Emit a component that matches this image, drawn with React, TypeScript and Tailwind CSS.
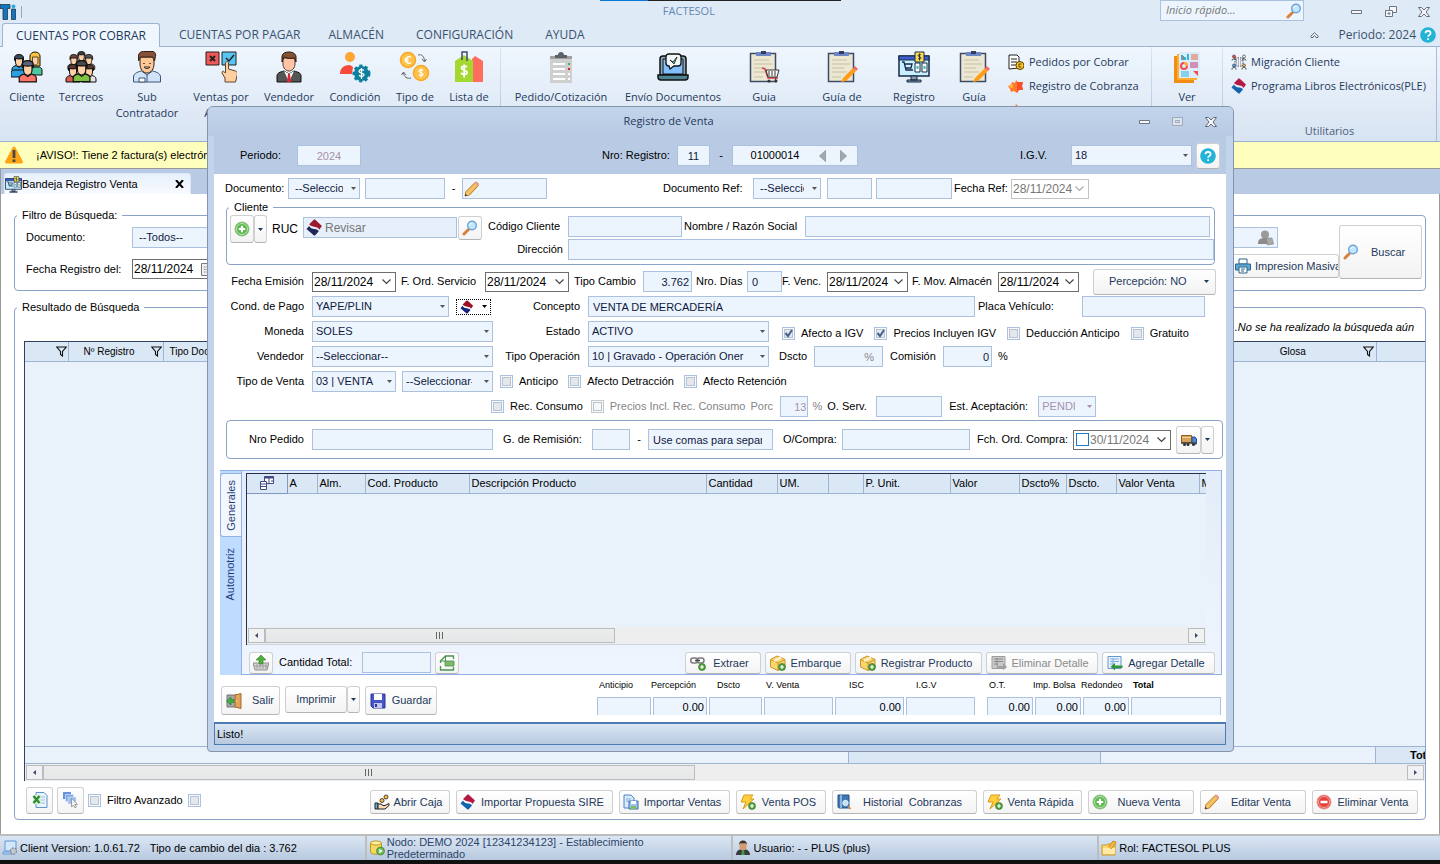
import type { InputHTMLAttributes, ReactNode } from "react";
import clsx from "clsx";

/* ---------- icons ---------- */

type IconProps = { size?: number; box?: number; children?: ReactNode };

const Icon = ({ size = 16, box = 16, children }: IconProps) => (
    <svg width={size} height={size} viewBox={`0 0 ${box} ${box}`} fill="none" className="shrink-0" aria-hidden="true">
        {children}
    </svg>
);

// bust of 16x18 units, used by all people icons
const Bust = ({ x, y, s = 1, hair, shirt, skin = "#ffd0a6" }: { x: number; y: number; s?: number; hair: string; shirt: string; skin?: string }) => (
    <g transform={`translate(${x} ${y}) scale(${s})`} stroke="#111" strokeWidth="1">
        <path d="M1 18v-3c0-2 2-3 4-3.500l3 2 3-2c2 .5 4 1.500 4 3.500v3z" fill={shirt} />
        <path d="M4.500 4h7v4c0 2.500-1.500 4.500-3.500 4.500S4.500 10.500 4.500 8z" fill={skin} />
        <path d="M3.500 6.500V4c0-2 1.500-3.500 4.500-3.500s4.500 1.500 4.500 3.500v2.500l-1-2c-2 .5-5 .5-7 0z" fill={hair} />
    </g>
);

const ClientesIcon = () => (
    <Icon size={32} box={32}>
        <Bust x={0} y={3} s={1} hair="#39485c" shirt="#2b9fe0" />
        <path d="M0 26v-4c0-2 2-3 4-3h8c2 0 3 1 3 3v4z" fill="#2b9fe0" stroke="#111" />
        <path d="M19 15V5c0-2 2-4 5-4s5 2 5 4v10z" fill="#ffc23d" stroke="#111" />
        <path d="M17 24v-5c0-2 2-3 4-3h6c2 0 4 1 4 3v5z" fill="#4fc7a0" stroke="#111" />
        <path d="M21.500 6h5.500v5c0 2-1 3-2.700 3s-2.800-1-2.800-3z" fill="#ffd0a6" stroke="#111" strokeWidth=".7" />
        <Bust x={7} y={9} s={1.22} hair="#59627a" shirt="#ff7466" />
    </Icon>
);

const TercerosIcon = () => (
    <Icon size={32} box={32}>
        <Bust x={10} y={0} s={0.8} hair="#3b3b3b" shirt="#888" />
        <Bust x={2} y={3} s={0.85} hair="#6d4638" shirt="#777" />
        <Bust x={17} y={3} s={0.85} hair="#555" shirt="#888" />
        <Bust x={0} y={13} s={1} hair="#5c3b2e" shirt="#d95c4f" />
        <Bust x={16} y={13} s={1} hair="#5c3b2e" shirt="#e3e3e3" />
        <Bust x={7} y={9} s={1.2} hair="#4a4a4a" shirt="#7cc142" />
    </Icon>
);

const ContratadorIcon = () => (
    <Icon size={32} box={32}>
        <path d="M2.500 31v-5c0-3 3-5 8-6l5.500 4 5.500-4c5 1 8 3 8 6v5z" fill="#cfe3fa" stroke="#3d5576" />
        <path d="M9 6h14v7c0 5-3 9-7 9s-7-4-7-9z" fill="#ffc795" stroke="#33231a" />
        <path d="M7.500 10V5c0-3 2-4.500 5-4.500h10c2 1 2.500 3 2 5l-1 4.500-2-4h-12z" fill="#87503a" stroke="#33231a" />
        <path d="M13 16c1 2 5 2 6 0z" fill="#fff" stroke="#33231a" />
        <path d="M13 12v1M19 12v1" stroke="#33231a" strokeWidth="1.500" />
        <path d="M16 24v7M8 27h6v4H8z" stroke="#3d5576" fill="#fff" />
    </Icon>
);

const VotoIcon = () => (
    <Icon size={32} box={32}>
        <path d="M1 1h13v13H1z" fill="#f25757" stroke="#222" />
        <path d="M17 1h14v13H17z" fill="#59c3f2" stroke="#222" />
        <path d="M5 5l5 5M10 5l-5 5" stroke="#222" strokeWidth="2" />
        <path d="M21 7l3 3 5-6" stroke="#222" strokeWidth="1.500" />
        <path d="M20 31v-4l-3-5c0-2 1-2.500 2.500-1l1 1V12c0-2 3-2 3 0v6l7 2c1 .5 2 1 2 3l-2 8z" fill="#ffcf9f" stroke="#5c4431" />
    </Icon>
);

const VendedorIcon = () => (
    <Icon size={32} box={32}>
        <path d="M4 31v-6c0-3 3-4 7-5l5 3 5-3c4 1 7 2 7 5v6z" fill="#555" stroke="#111" />
        <path d="M11 20l5 11 5-11-5 3z" fill="#fff" />
        <path d="M15 23h2l1 8h-4z" fill="#e02533" />
        <path d="M10 7h12v6c0 4-3 7-6 7s-6-3-6-7z" fill="#ffc3a5" stroke="#5a3b2c" />
        <path d="M9 11V5c1-3 3-4 7-4s7 2 7 5v5l-2-4c-4 1-8 0-10-1z" fill="#845233" stroke="#2b1a10" />
    </Icon>
);

const CondicionIcon = () => (
    <Icon size={32} box={32}>
        <circle cx="11" cy="6" r="5" fill="#ffa632" />
        <path d="M1 23c0-6 4-9 10-9l3 2-1 7z" fill="#f44b3a" />
        <circle cx="22.500" cy="22.500" r="7.500" fill="#0d7f9c" stroke="#0d7f9c" strokeWidth="3" strokeDasharray="3 2.500" />
        <path d="M25 19.500c-2-1.500-5-1-5 .8 0 2.200 5 1.300 5 3.500 0 2-3.500 2-5 .5M22.500 17v11" stroke="#fff" strokeWidth="1.300" />
    </Icon>
);

const CambioIcon = () => (
    <Icon size={32} box={32}>
        <circle cx="9" cy="9" r="7.500" fill="#ffc14a" stroke="#f7a823" strokeWidth="1.500" />
        <circle cx="22" cy="22" r="7.500" fill="#ffc14a" stroke="#f7a823" strokeWidth="1.500" />
        <path d="M12 6.500c-2-2-5-.5-5 2.500s3 4.500 5 2.500M5.500 8h4M5.500 10h4" stroke="#fff" strokeWidth="1.300" />
        <path d="M24 19.500c-2-1.500-4-.8-4 .6 0 2 4 1.300 4 3.200 0 1.800-2.800 1.600-4 .5M22 17.500v9" stroke="#fff" strokeWidth="1.200" />
        <path d="M19 4c4-1 6 1 6.500 6m-2.500-2l2.500 3 2-3M12 27c-4 1-7-1-7.500-5m-2 2l2-3 2.500 3" stroke="#666" />
    </Icon>
);

const PrecioIcon = () => (
    <Icon size={32} box={32}>
        <path d="M19 8l3-3 8 5v21H18z" fill="#ff6d5e" />
        <path d="M2 10l9-6 9 6v21H2z" fill="#a4d830" />
        <path d="M9 9V1h5v9" stroke="#3d4b6c" strokeWidth="1.500" />
        <path d="M14 16c-2-1.500-5.500-1-5.500 1 0 2.500 5.500 1.500 5.500 4.500 0 2.500-4 2.500-6 .5M11.200 13.500v13" stroke="#fff" strokeWidth="1.800" />
    </Icon>
);

const PedidoIcon = () => (
    <Icon size={32} box={32}>
        <path d="M5 5h22v27H5z" fill="#cfcfcf" />
        <path d="M5 5h22v3H5z" fill="#a0a0a0" />
        <path d="M10 7V4h3c0-4 6-4 6 0h3v3z" fill="#5d6066" />
        <path d="M8 13h12M8 18h12M8 23h12M8 28h12" stroke="#fff" strokeWidth="2" />
        <path d="M23 12h2v2h-2z" fill="#46b455" />
        <path d="M23 17h2v2h-2z" fill="#d8232a" />
        <path d="M23 22h2v2h-2zM23 27h2v2h-2z" fill="#fff" />
    </Icon>
);

const EnvioIcon = () => (
    <Icon size={32} box={32}>
        <path d="M3 24V8c0-2 1-3 3-3h20c2 0 3 1 3 3v16z" fill="#8ea9bd" stroke="#111" strokeWidth="1.500" />
        <path d="M6 8h20v15H6z" fill="#81c0ff" stroke="#111" />
        <path d="M1 24h30v2c0 2-1 3-3 3H4c-2 0-3-1-3-3z" fill="#4f8593" stroke="#111" strokeWidth="1.500" />
        <path d="M12 3h9c2 0 3 1 3 3v6c0 2-1 3-3 3h-4l-4 3-1-3c-2 0-3-1-3-3V6c0-2 1-3 3-3z" fill="#f3f6f7" stroke="#111" strokeWidth="1.300" />
        <path d="M13 9l3 2 4-5-3 7z" fill="#57d29a" stroke="#111" strokeWidth=".8" />
    </Icon>
);

const GuiaIcon = ({ cart }: { cart?: boolean }) => (
    <Icon size={32} box={32}>
        <path d="M2.500 2.500h25v28h-25z" fill="#ebe7d3" stroke="#3e4b66" strokeWidth="1.500" />
        <path d="M8 1h15v4H8z" fill="#6d86c7" />
        <path d="M13 0h5v3h-5z" fill="#343d57" />
        <path d="M6 9h15M6 13h18M6 17h12M6 21h15M6 26h9" stroke="#c7bf9f" />
        {cart ? (
            <g>
                <path d="M14 17l3 1 3 9h10" stroke="#d8394b" strokeWidth="1.500" />
                <path d="M18 19h13l-2 7H20z" fill="#fff" stroke="#333" />
                <path d="M21 20v5M24 20v5M27 20v5" stroke="#333" />
                <circle cx="21" cy="30" r="1.500" fill="#333" />
                <circle cx="28" cy="30" r="1.500" fill="#333" />
            </g>
        ) : (
            <g>
                <path d="M15 31l2-4 10-10 3 3-10 10z" fill="#ff9c1a" />
                <path d="M27 17l2-2 3 3-2 2z" fill="#ef6b68" />
            </g>
        )}
    </Icon>
);

const MonitorIcon = ({ size = 32 }: { size?: number }) => (
    <Icon size={size} box={32}>
        <path d="M1 5h30v20H1z" fill="#c9f0ff" stroke="#172a48" strokeWidth="1.500" />
        <path d="M1 5h30v4H1z" fill="#3e5fd0" stroke="#172a48" />
        <path d="M13 25h6v4h-6zM9 29h14v2H9z" fill="#8a97a6" stroke="#172a48" />
        <path d="M4 11h2l2 8h7M6 13h8l-1 4H7" stroke="#172a48" strokeWidth="1.300" />
        <path d="M17 12h5v9h-5zM24 12h5v9h-5z" fill="#fff" stroke="#172a48" />
        <path d="M18.500 15h2v3h-2zM25.500 15h2v3h-2z" fill="#46b4a0" />
        <path d="M17 1h9v10h-9z" fill="#ffdc4d" stroke="#172a48" />
        <path d="M23 4c-1-1-3-.5-3 .7s3 .8 3 2.200-2 1.500-3 .5M21.500 2.500v7" stroke="#172a48" strokeWidth=".9" />
    </Icon>
);

const ReporteIcon = () => (
    <Icon size={32} box={32}>
        <path d="M3 5h20v27H3z" fill="#f28c13" />
        <path d="M6 3h20v26H6z" fill="#ffac2f" />
        <path d="M8 1h21v26H8z" fill="#dcecfb" />
        <path d="M11 4v5M14 6v3M17 3v6" stroke="#2fb6dd" strokeWidth="2" />
        <path d="M12.500 5v4M20 4h7M20 6h7M20 8h7" stroke="#e2683c" strokeWidth="1" />
        <circle cx="13" cy="15" r="3" stroke="#f14c4c" strokeWidth="2" />
        <path d="M13 12a3 3 0 0 1 3 3" stroke="#ffac2f" strokeWidth="2" />
        <path d="M19 12h8M19 14h8M19 16h8" stroke="#c8336e" />
        <path d="M10 21h8M10 23h8M10 25h8" stroke="#2fb6dd" />
        <path d="M22 20h5v5z" fill="#f14c4c" />
    </Icon>
);

const PedidosCobrarIcon = () => (
    <Icon>
        <path d="M1 15V1h8l2 2v11z" fill="#fff" stroke="#222" />
        <path d="M3 5h6M3 8h6M3 11h5" stroke="#222" />
        <circle cx="12" cy="11.500" r="4" fill="#ffc928" stroke="#5c4200" />
        <path d="M13.500 10h-2.500v3h2.500" stroke="#5c4200" />
    </Icon>
);

const CobranzaIcon = () => (
    <Icon>
        <path d="M0 8l3-1 1-3 3 1 1-3 3 3 4-1-1 4 1 4-4 0-2 3-3-2-3 1-1-3z" fill="#ff7b2b" />
        <path d="M9 4l6 0-1 4 1 4-4 0-2 3z" fill="#f7502b" />
        <path d="M1 7l4-1v4l-4-1z" fill="#ffb53b" />
    </Icon>
);

const MigracionIcon = () => (
    <Icon>
        <path d="M4 4h8v8H4z" stroke="#445" strokeDasharray="1.500 1" />
        <path d="M5 6h6M5 8h6M5 10h6" stroke="#445" strokeWidth=".7" strokeDasharray="1 1" />
        <circle cx="3" cy="2.500" r="1.500" fill="#ef4b4b" stroke="#333" strokeWidth=".6" />
        <circle cx="13" cy="2.500" r="1.500" fill="#eee" stroke="#333" strokeWidth=".6" />
        <circle cx="3" cy="11.500" r="1.500" fill="#53a7ef" stroke="#333" strokeWidth=".6" />
        <circle cx="13" cy="11.500" r="1.500" fill="#ffb13b" stroke="#333" strokeWidth=".6" />
        <path d="M1 6.500c0-2 4-2 4 0M11 6.500c0-2 4-2 4 0M1 15.500c0-3 4-3 4 0M11 15.500c0-3 4-3 4 0" stroke="#333" />
    </Icon>
);

const SunatIcon = ({ size = 16, top = "#b31942", bottom = "#1463ae" }: { size?: number; top?: string; bottom?: string }) => (
    <Icon size={size}>
        <path d="M3 5l4.500-4.500h1L15 6.500l-2.500 3.500C11.500 6.500 6 8.500 3 5z" fill={top} />
        <path d="M.5 9.500L3 6.500c2 4.500 7.500 1.500 9 5L8.500 15.500h-1z" fill={bottom} />
    </Icon>
);

const HelpIcon = () => (
    <Icon>
        <circle cx="8" cy="8" r="7.800" fill="#22b3d6" />
        <path d="M5.500 6.200C5.500 3 10.600 3 10.600 6.200c0 1.800-2.500 1.900-2.500 3.600M8.100 11.300v1.600" stroke="#fff" strokeWidth="1.700" />
    </Icon>
);

const LupaIcon = () => (
    <Icon>
        <path d="M2 14l4.500-4.500" stroke="#d8813f" strokeWidth="3" strokeLinecap="round" />
        <circle cx="10" cy="5.500" r="4.300" fill="#c2e6fb" stroke="#6aa3dc" strokeWidth="1.400" />
        <path d="M7.500 5c.5-1.500 2-2 3-1.800" stroke="#fff" />
    </Icon>
);

const LapizIcon = () => (
    <Icon>
        <path d="M1 15l1-4.500L11 1.500c1-1 4 1.500 3.300 3L5.500 14z" fill="#fbd06e" stroke="#b5792d" />
        <path d="M3 11.500l8.500-8.500M4.500 13l8.500-8.500" stroke="#e0963a" strokeWidth=".8" />
        <path d="M10.500 2l1-1c1.300-.8 4 1.800 3.300 3.200l-1 1z" fill="#e99a93" />
        <path d="M1 15l.6-2.200 1.700 1.600z" fill="#333" />
    </Icon>
);

const MasIcon = () => (
    <Icon>
        <circle cx="8" cy="8" r="7" fill="#5db84e" stroke="#8fbf86" />
        <circle cx="8" cy="8" r="5.500" stroke="#d4f0cc" strokeWidth=".8" />
        <path d="M8 4.800v6.400M4.800 8h6.400" stroke="#fff" strokeWidth="2.200" />
    </Icon>
);

const MenosIcon = () => (
    <Icon>
        <circle cx="8" cy="8" r="7" fill="#e4433d" stroke="#e89a94" />
        <circle cx="8" cy="8" r="5.500" stroke="#f6b9b4" strokeWidth=".8" />
        <path d="M4.500 8h7" stroke="#fff" strokeWidth="2.400" />
    </Icon>
);

const Plusito = () => (
    <g>
        <circle cx="12" cy="12" r="3.500" fill="#4f9f3c" stroke="#2f7322" strokeWidth=".6" />
        <path d="M12 10v4M10 12h4" stroke="#fff" strokeWidth="1.200" />
    </g>
);

const RayoIcon = () => (
    <Icon>
        <path d="M4 1h9l-3 4h4L3 15l3-7H1z" fill="#ffcf3e" stroke="#d99c18" />
        <Plusito />
    </Icon>
);

const CajaIcon = () => (
    <Icon>
        <path d="M.5 4.500L7 1l8 3.500V12l-7 3.500L.5 12z" fill="#fbd56d" stroke="#c9932c" />
        <path d="M.5 4.500L8 8v7.500M8 8l7-3.500" stroke="#c9932c" />
        <path d="M4 6l7-3.500" stroke="#fff5d0" strokeWidth="2" />
        <Plusito />
    </Icon>
);

const CadenaIcon = () => (
    <Icon>
        <rect x=".8" y="3" width="7" height="5" rx="2.500" stroke="#7c7c7c" strokeWidth="1.500" />
        <rect x="7" y="3" width="7" height="5" rx="2.500" stroke="#7c7c7c" strokeWidth="1.500" />
        <path d="M5 5.500h5" stroke="#4b4b4b" strokeWidth="1.500" />
        <Plusito />
    </Icon>
);

const DetalleIcon = ({ off }: { off?: boolean }) => (
    <Icon>
        <path d="M1 1.500h13v12H1z" fill={off ? "#c9c9c9" : "#e6f1fd"} stroke={off ? "#9d9d9d" : "#6496cf"} />
        <path d="M3 4h9M3 6.500h9M3 9h4M6 3v8" stroke={off ? "#8b8b8b" : "#7fb0e2"} />
        {off ? <path d="M6 11h6V8l4 4-4 3v-2H6z" fill="#a1a1a1" /> : <path d="M15.500 10.500H8V8L3.500 11.700 8 15.500V13h7.500z" fill="#33953b" />}
    </Icon>
);

const MonedaManoIcon = () => (
    <Icon>
        <circle cx="12" cy="3" r="2" fill="#ffbf3b" stroke="#222" strokeWidth=".8" />
        <circle cx="8" cy="6.500" r="2" fill="#ffbf3b" stroke="#222" strokeWidth=".8" />
        <path d="M1 9h3v6H1z" fill="#5db7dd" stroke="#222" />
        <path d="M4 10h3l2 1.500h2l4-2v2L11 15H4z" fill="#ffd9b5" stroke="#222" />
    </Icon>
);

const ImportarIcon = () => (
    <Icon>
        <path d="M1 1h7l3 3v10H1z" fill="#d9eafc" stroke="#4a83c6" />
        <path d="M3 5h5M3 7h3" stroke="#7fadde" />
        <path d="M6 7h9v8H6z" fill="#9cc2ee" stroke="#3c6fb1" />
        <path d="M8 7h5v3H8z" fill="#fff" />
        <path d="M8 12h5v3H8z" fill="#7fbf5b" />
    </Icon>
);

const HistorialIcon = () => (
    <Icon>
        <path d="M2 1h11v13H3.500C2 14 2 13 2 12z" fill="#3d78b5" stroke="#25527f" />
        <path d="M5 1v13" stroke="#a7c8e8" strokeWidth="1.500" />
        <circle cx="9.500" cy="9" r="2.700" fill="#bfe0f7" stroke="#e6f2fb" />
        <path d="M12 12l2.500 3" stroke="#cf8647" strokeWidth="1.800" />
    </Icon>
);

const ExcelIcon = () => (
    <Icon>
        <path d="M4 .5h8l3 3v12H4z" fill="#e8f3fd" stroke="#5c93cb" />
        <path d="M7 5h6M7 8h6M7 11h6" stroke="#9cc3e6" />
        <path d="M1 3h8v9H1z" fill="#d6efd0" />
        <path d="M1.500 4l6 7M7.500 4l-6 7" stroke="#2f8f35" strokeWidth="2.400" />
    </Icon>
);

const SeleccionIcon = () => (
    <Icon>
        <path d="M0 0h8v7H0z" fill="#6a93dc" />
        <path d="M2.500 2.500h8v7h-8z" fill="#7ba6e8" stroke="#dbe7fa" strokeWidth=".7" />
        <path d="M5 5h8v7H5z" fill="#9bbdf0" stroke="#dbe7fa" strokeWidth=".7" />
        <path d="M8.500 6v9l2-2 1.500 3 1.500-1-1.500-2.500h2.500z" fill="#f1f1f1" stroke="#8a8a8a" strokeWidth=".8" />
    </Icon>
);

const CamionIcon = () => (
    <Icon>
        <path d="M.5 3.500h10v7H.5z" fill="#d9a057" stroke="#8f5f26" />
        <path d="M1 5.500h9" stroke="#f2cf9a" />
        <path d="M11 5h3l1.500 2v5H11z" fill="#4c86d6" stroke="#254f8a" />
        <path d="M0 11h15" stroke="#444" strokeWidth="1.500" />
        <circle cx="3.500" cy="12.500" r="1.500" fill="#333" />
        <circle cx="7" cy="12.500" r="1.500" fill="#333" />
        <circle cx="12.500" cy="12.500" r="1.500" fill="#333" />
    </Icon>
);

const SalirIcon = () => (
    <Icon>
        <path d="M1 2h9v12H1z" fill="#a7a7a7" stroke="#757575" />
        <path d="M9 2l6-1.500v15L9 14z" fill="#e3a25a" stroke="#a4692c" />
        <circle cx="10.800" cy="8.300" r=".7" fill="#ffe27a" />
        <path d="M8 6.500H5V4L.5 8 5 12V9.500h3z" fill="#42ad46" stroke="#1f7a28" strokeWidth=".6" />
    </Icon>
);

const GuardarIcon = () => (
    <Icon>
        <path d="M1 1h14v14H3l-2-2z" fill="#4653c9" stroke="#2c3698" />
        <path d="M4 1h8v6H4z" fill="#fff" />
        <path d="M4 10h8v5H4z" fill="#c3c9ee" />
        <path d="M5 11h2v3H5z" fill="#2c3698" />
    </Icon>
);

const CestaIcon = () => (
    <Icon>
        <path d="M0 8h16l-2 7H2z" fill="#d6d6d6" stroke="#8e8e8e" />
        <path d="M4 9v5M7 9v5M10 9v5M13 9v5M1 11h14" stroke="#8e8e8e" strokeWidth=".7" />
        <path d="M8 0l5 5h-3v4H6V5H3z" fill="#4fae3f" stroke="#2f7d24" strokeWidth=".6" />
    </Icon>
);

const HojaVerdeIcon = () => (
    <Icon>
        <path d="M1.500 8V6l5-5h8v3M1.500 11v4h13v-3" stroke="#4c9150" strokeWidth="1.300" />
        <path d="M6.500 1v5h-5" stroke="#4c9150" />
        <path d="M6 6h9v5H6z" fill="#7fb86a" stroke="#4c9150" strokeWidth=".8" />
    </Icon>
);

const ImpresoraIcon = () => (
    <Icon>
        <path d="M4 1h8v5H4z" fill="#fff" stroke="#2c6487" />
        <path d="M.5 6h15v6H.5z" fill="#5aa8da" stroke="#2c6487" />
        <path d="M4 9h8v6H4z" fill="#fff" stroke="#2c6487" />
        <path d="M6 11h4M6 13h3" stroke="#2c6487" />
    </Icon>
);

const AlertaIcon = () => (
    <Icon size={20} box={20}>
        <path d="M10 1.500c.6 0 1 .3 1.300.8l7.500 14c.5 1-.1 2.200-1.200 2.200H2.400c-1.100 0-1.700-1.200-1.200-2.200l7.500-14c.3-.5.700-.8 1.300-.8z" fill="#ffa514" />
        <path d="M10 5v8M10 14.500v2.500" stroke="#46484d" strokeWidth="2.800" />
    </Icon>
);

const CalendarioIcon = () => (
    <Icon size={14} box={14}>
        <path d="M.5 1.500h13v12H.5z" fill="#eee" stroke="#777" />
        <path d="M3 5h8M3 7.500h8M3 10h8" stroke="#888" strokeDasharray="1.500 1" />
    </Icon>
);

const GrisIcon = () => (
    <Icon>
        <circle cx="7" cy="4.500" r="4" fill="#9a9a9a" />
        <path d="M0 13c0-4 3-5 7-5s8 2 8 6H0z" fill="#8c8c8c" />
        <path d="M8 8h6l1.500 6-6 1z" fill="#a9a9a9" stroke="#808080" strokeWidth=".6" />
    </Icon>
);

const SistemaIcon = () => (
    <Icon>
        <path d="M3 1h11v10H3zM1 12h10v2H1z" fill="#d3e7fb" stroke="#5e97d2" />
        <circle cx="11.500" cy="11" r="3" fill="#c7ccd4" stroke="#87909d" strokeWidth="1.500" strokeDasharray="2 1" />
    </Icon>
);

const BaseIcon = () => (
    <Icon>
        <path d="M1.500 3v9c0 3 11 3 11 0V3" fill="#f4d75b" stroke="#bc9c23" />
        <ellipse cx="7" cy="3" rx="5.500" ry="2" fill="#fff0a3" stroke="#bc9c23" />
        <circle cx="11.500" cy="11" r="4" fill="#6bb85b" stroke="#3d7e31" strokeWidth=".7" />
        <path d="M10.300 8.800l3.500 2.200-3.500 2.200z" fill="#fff" />
    </Icon>
);

const UsuarioIcon = () => (
    <Icon>
        <path d="M1 15c0-4 3-6 7-6s7 2 7 6z" fill="#3b3b3b" />
        <path d="M4.500 4h7v3c0 2-1.500 3.500-3.500 3.500S4.500 9 4.500 7z" fill="#d99a6c" />
        <path d="M4 5c0-3 1.500-4.500 4-4.500S12 2 12 5l-1-1.500H5z" fill="#46311f" />
        <path d="M7 10h2l.7 5H6.300z" fill="#3f9a4c" />
    </Icon>
);

const RolIcon = () => (
    <Icon>
        <path d="M1 5h5l1-1h7v11H1z" fill="#ffd86c" stroke="#c99a25" />
        <path d="M2 8h12v6H2z" fill="#ffeaa6" />
        <path d="M7 7l5-6 3 1-1 3-4 4" fill="#f2b23c" stroke="#b67c1c" strokeWidth=".7" />
    </Icon>
);

const FiltroIcon = () => (
    <Icon size={11} box={11}>
        <path d="M.8 1h9.400L6.500 5.500V10l-2-1.500v-3z" stroke="#111" strokeWidth="1.100" />
    </Icon>
);

const Flecha = ({ color = "#444" }: { color?: string }) => (
    <svg width="5" height="3" viewBox="0 0 5 3" fill={color} className="shrink-0" aria-hidden="true">
        <path d="M0 0h5L2.500 3z" />
    </svg>
);

const Chevron = ({ color = "#555" }: { color?: string }) => (
    <svg width="9" height="6" viewBox="0 0 9 6" fill="none" stroke={color} strokeWidth="1.200" className="mr-1 shrink-0" aria-hidden="true">
        <path d="M.5.5l4 4 4-4" />
    </svg>
);

const Minimizar = () => (
    <Icon size={12} box={12}>
        <path d="M.5 4.500h10v3H.5z" fill="#f5f7fa" stroke="#6d7683" />
    </Icon>
);

const Cerrar = () => (
    <Icon size={12} box={12}>
        <path d="M.5 1.500h3L6 4l2.500-2.500h3L8 6l3.500 4.500h-3L6 8l-2.500 2.500h-3L4 6z" fill="#f5f7fa" stroke="#5f6978" />
    </Icon>
);

const Restaurar = () => (
    <Icon size={12} box={12}>
        <path d="M4.500.5h7v6h-7z" fill="#f5f7fa" stroke="#6d7683" />
        <path d="M.500 4.500h7v6h-7z" fill="#f5f7fa" stroke="#6d7683" />
        <path d="M3 7h2v1H3z" stroke="#6d7683" />
    </Icon>
);

const Maximizar = () => (
    <Icon size={12} box={12}>
        <path d="M.5 1.500h10v8H.5z" fill="#dbe3ee" stroke="#a0a9b8" />
        <path d="M3.500 4.500h4v2h-4z" stroke="#a0a9b8" />
    </Icon>
);

/* ---------- controls ---------- */

const boxStyle = "h-[21px] border border-[#abc1de] bg-[#ecf5fe] text-[#101840] text-[11px] outline-none";
const btnStyle =
    "flex items-center rounded-[3px] border border-[#d0d0d0] border-b-[#b4b4b4] bg-linear-to-b from-white to-[#f3f3f3] text-[#1e395b] whitespace-nowrap overflow-hidden";

const TextBox = ({ className, ...rest }: InputHTMLAttributes<HTMLInputElement>) => (
    <input type="text" className={clsx(boxStyle, "min-w-0 shrink-0 px-1", className)} {...rest} />
);

const Combo = ({ value, className, label, off, pad = "pl-[3px]" }: { value: string; className?: string; label?: string; off?: boolean; pad?: string }) => (
    <span className={clsx("relative inline-flex items-center", className)}>
        <select aria-label={label} disabled={off} className={clsx(boxStyle, "w-full appearance-none pr-4", pad, off && "!text-[#a890b0]")}>
            <option>{value}</option>
        </select>
        <span className="pointer-events-none absolute right-1">
            <Flecha color={off ? "#a890b0" : "#555"} />
        </span>
    </span>
);

type DateBoxProps = { value?: string; className?: string; off?: boolean; calendar?: boolean; children?: ReactNode };

const DateBox = ({ value = "28/11/2024", className, off, calendar, children }: DateBoxProps) => (
    <span className={clsx("flex h-5 items-center border bg-white", off ? "border-[#c3c3c3]" : "border-[#6e6e6e]", className)}>
        {children}
        <input
            type="text"
            aria-label="Fecha"
            defaultValue={value}
            className={clsx("w-0 min-w-0 flex-1 bg-transparent pl-px text-xs outline-none", off || children ? "text-[#777]" : "text-black")}
        />
        {calendar ? <CalendarioIcon /> : <Chevron color={off ? "#aaa" : "#444"} />}
    </span>
);

const Field = ({ label, width, children, className }: { label: string; width: string; children: ReactNode; className?: string }) => (
    <label className={clsx("flex items-center", className)}>
        <span className={clsx("shrink-0 whitespace-nowrap", width)}>{label}</span>
        {children}
    </label>
);

const checkStyle =
    "size-[13px] appearance-none border border-[#abc1de] bg-[#e4e8ed] shadow-[inset_0_0_0_1px_#f7fafd,inset_0_0_0_2px_#b9c2cf] disabled:border-[#c8c8c8] disabled:bg-[#f7f7f7]";

const Check = ({ label, checked, off, className }: { label: string; checked?: boolean; off?: boolean; className?: string }) => (
    <label className={clsx("flex items-center gap-[6px] whitespace-nowrap", off && "text-[#858585]", className)}>
        <span className="relative flex">
            <input type="checkbox" defaultChecked={checked} disabled={off} className={checkStyle} />
            {checked && (
                <svg width="13" height="13" viewBox="0 0 13 13" fill="none" className="pointer-events-none absolute inset-0" aria-hidden="true">
                    <path d="M3.500 6l2.500 3 4-6" stroke="#45618f" strokeWidth="2" />
                </svg>
            )}
        </span>
        <span>{label}</span>
    </label>
);

const HScroll = ({ thumb }: { thumb: string }) => (
    <div className="flex h-[17px] items-center bg-[#eeeeee] px-px">
        <button aria-label="Izquierda" className="flex h-[15px] w-[17px] items-center justify-center border border-[#b9bcc0] bg-[#f0f1f3]">
            <svg width="3" height="5" viewBox="0 0 3 5" fill="#3b4a66" aria-hidden="true"><path d="M3 0v5L0 2.500z" /></svg>
        </button>
        <div className={clsx("flex h-[15px] items-center justify-center border border-[#b9bcc0] bg-linear-to-b from-[#ebecec] to-[#e5e7e8]", thumb)}>
            <svg width="8" height="7" viewBox="0 0 8 7" stroke="#666" aria-hidden="true"><path d="M.5 0v7M3.500 0v7M6.500 0v7" /></svg>
        </div>
        <button aria-label="Derecha" className="ml-auto flex h-[15px] w-[17px] items-center justify-center border border-[#b9bcc0] bg-[#f0f1f3]">
            <svg width="3" height="5" viewBox="0 0 3 5" fill="#3b4a66" aria-hidden="true"><path d="M0 0v5l3-2.500z" /></svg>
        </button>
    </div>
);

/* ---------- ribbon ---------- */

const grupoPrincipal = [
    { label: "Cliente", icon: <ClientesIcon />, width: "w-[54px]" },
    { label: "Tercreos", icon: <TercerosIcon />, width: "w-[54px]" },
    { label: "Sub Contratador", icon: <ContratadorIcon />, width: "w-[78px]" },
    { label: "Ventas por Acción", icon: <VotoIcon />, width: "w-[70px]" },
    { label: "Vendedor", icon: <VendedorIcon />, width: "w-[66px]" },
    { label: "Condición", icon: <CondicionIcon />, width: "w-[66px]" },
    { label: "Tipo de", icon: <CambioIcon />, width: "w-[54px]" },
    { label: "Lista de", icon: <PrecioIcon />, width: "w-[54px]" },
];

const grupoDocumentos = [
    { label: "Pedido/Cotización", icon: <PedidoIcon />, width: "w-[112px]" },
    { label: "Envío Documentos", icon: <EnvioIcon />, width: "w-[112px]" },
    { label: "Guia", icon: <GuiaIcon cart />, width: "w-[70px]" },
    { label: "Guía de", icon: <GuiaIcon />, width: "w-[86px]" },
    { label: "Registro", icon: <MonitorIcon />, width: "w-[58px]" },
    { label: "Guía", icon: <GuiaIcon />, width: "w-[62px]" },
];

const RibbonItem = ({ label, icon, width }: { label: string; icon: ReactNode; width: string }) => (
    <button className={clsx("flex shrink-0 flex-col items-center gap-[6px] pt-1 text-center leading-4", width)}>
        {icon}
        <span>{label}</span>
    </button>
);

const Divisor = () => <div className="mx-1 w-px bg-linear-to-b from-[#dbe6f3] to-[#a9bcd6]" />;

const Ribbon = () => (
    <header className="bg-[#deeaf6] font-['Open_Sans',sans-serif] text-[11px] text-[#1e395b]">
        <div className="relative flex h-[23px] items-center">
            <div className="absolute top-0 left-[600px] flex">
                <div className="h-px w-12 bg-[#0a78d8]" />
                <div className="h-px w-[193px] bg-[#222]" />
            </div>
            <svg width="17" height="16" viewBox="0 0 17 16" className="shrink-0" aria-hidden="true">
                <path d="M0 .5h10v4H7.500v11H3V4.500H0z" fill="#1377bd" stroke="#24384d" strokeWidth=".8" />
                <path d="M11.500 5h4v10.500h-4z" fill="#1377bd" stroke="#24384d" strokeWidth=".8" />
                <circle cx="13.500" cy="2.300" r="1.900" fill="#28a9e0" />
            </svg>
            <div className="ml-1 h-3 w-px bg-[#9fa9b5]" />
            <h1 className="w-full pl-[196px] text-center text-[#6786b4]">FACTESOL</h1>
            <div className="mb-0.5 flex h-[21px] w-36 shrink-0 items-center border border-[#abc1de] bg-[#ecf5fe] pr-px">
                <input type="text" aria-label="Inicio rápido" placeholder="Inicio rápido..." className="min-w-0 flex-1 pl-[5px] italic outline-none placeholder:text-[#777]" />
                <LupaIcon />
            </div>
            <div className="flex w-[136px] shrink-0 items-center justify-between pr-[10px] pl-[47px]">
                <button aria-label="Minimizar"><Minimizar /></button>
                <button aria-label="Restaurar"><Restaurar /></button>
                <button aria-label="Cerrar"><Cerrar /></button>
            </div>
        </div>

        <nav className="relative z-10 -mb-px flex h-6 items-center gap-8 text-xs text-[#3b516f]">
            <button className="ml-[2px] h-6 w-[158px] rounded-t-[3px] border border-b-0 border-[#9db4d3] bg-[#eff6fe] text-[#1e395b]">CUENTAS POR COBRAR</button>
            <button className="-ml-[13px]">CUENTAS POR PAGAR</button>
            <button className="-ml-1">ALMACÉN</button>
            <button>CONFIGURACIÓN</button>
            <button>AYUDA</button>
            <div className="ml-auto flex items-center gap-1 pr-1">
                <svg width="9" height="7" viewBox="0 0 9 7" className="mr-4" fill="#fff" stroke="#4c5b72" aria-hidden="true">
                    <path d="M.7 4.500l3.800-3.700 3.800 3.700-1.300 1.500-2.500-2.300L2 6z" />
                </svg>
                <span>Periodo: 2024</span>
                <HelpIcon />
            </div>
        </nav>

        <div className="flex h-24 overflow-hidden border-t border-b border-t-[#9db4d3] border-b-[#9db0cc] bg-linear-to-b from-[#eff6fe] to-[#d8e4f2]">
            {grupoPrincipal.map((item) => (
                <RibbonItem key={item.label} {...item} />
            ))}
            <Divisor />
            {grupoDocumentos.map((item) => (
                <RibbonItem key={item.label} {...item} />
            ))}
            <div className="flex w-[142px] flex-col gap-2 pt-[7px] pl-[3px]">
                <button className="flex items-center gap-[5px] whitespace-nowrap leading-4"><PedidosCobrarIcon />Pedidos por Cobrar</button>
                <button className="flex items-center gap-[5px] whitespace-nowrap leading-4"><CobranzaIcon />Registro de Cobranza</button>
                <button aria-label="Más" className="flex"><CobranzaIcon /></button>
            </div>
            <Divisor />
            <RibbonItem label="Ver" icon={<ReporteIcon />} width="w-[62px]" />
            <Divisor />
            <div className="flex flex-1 flex-col gap-2 pt-[7px] pl-1">
                <button className="flex items-center gap-[4px] whitespace-nowrap leading-4"><MigracionIcon />Migración Cliente</button>
                <button className="flex items-center gap-[4px] whitespace-nowrap leading-4"><SunatIcon />Programa Libros Electrónicos(PLE)</button>
                <div className="mt-auto pr-2 pb-[2px] text-center leading-4 text-[#4c607a]">Utilitarios</div>
            </div>
            <div className="mr-[3px] w-px bg-[#a9bcd6]" />
        </div>
    </header>
);

/* ---------- main tray behind the dialog ---------- */

const acciones = [
    { label: "Abrir Caja", icon: <MonedaManoIcon />, width: "w-[80px]" },
    { label: "Importar Propuesta SIRE", icon: <SunatIcon />, width: "w-[157px]" },
    { label: "Importar Ventas", icon: <ImportarIcon />, width: "w-[111px]" },
    { label: "Venta POS", icon: <RayoIcon />, width: "w-[90px]" },
    { label: "Historial  Cobranzas", icon: <HistorialIcon />, width: "w-[145px]" },
    { label: "Venta Rápida", icon: <RayoIcon />, width: "w-[99px]" },
    { label: "Nueva Venta", icon: <MasIcon />, width: "w-[106px]" },
    { label: "Editar Venta", icon: <LapizIcon />, width: "w-[106px]" },
    { label: "Eliminar Venta", icon: <MenosIcon />, width: "w-[106px]" },
];

// caption sits over the top border of its box
const Grupo = ({ title, className, children }: { title: string; className: string; children: ReactNode }) => (
    <section aria-label={title} className={clsx("flex flex-col rounded-[4px] border border-[#8ba3c7]", className)}>
        <h2 className="-mt-2 ml-[2px] self-start bg-white px-[5px] leading-[14px]">{title}</h2>
        {children}
    </section>
);

const Bandeja = () => (
    <main className="flex flex-1 flex-col border-x border-[#9a9a9a] bg-white px-[13px] pb-[14px]">
        <Grupo title="Filtro de Búsqueda:" className="mt-[21px] h-[76px]">
            <div className="flex flex-1 justify-between pr-[3px] pl-[11px]">
                <div className="flex flex-col gap-[11px] pt-[5px]">
                    <Field label="Documento:" width="w-[106px]">
                        <Combo value="--Todos--" className="w-40" pad="pl-[6px]" />
                    </Field>
                    <Field label="Fecha Registro del:" width="w-[106px]">
                        <DateBox className="w-[84px]" calendar />
                    </Field>
                </div>
                <div className="flex pt-[3px]">
                    <div className="flex flex-col gap-[6px] pt-[2px]">
                        <div className="flex h-[21px] w-[145px] items-center border border-[#abc1de] bg-[#ecf5fe] pr-[3px]">
                            <input type="text" aria-label="Cliente" className="min-w-0 flex-1 outline-none" />
                            <GrisIcon />
                        </div>
                        <button className={clsx(btnStyle, "h-6 w-[206px] gap-1 pl-[101px]")}><ImpresoraIcon />Impresion Masiva</button>
                    </div>
                    <button className={clsx(btnStyle, "h-[54px] w-[83px] gap-3 pl-[3px]")}><LupaIcon />Buscar</button>
                </div>
            </div>
        </Grupo>

        <Grupo title="Resultado de Búsqueda" className="mt-4 flex-1">
            <p className="flex h-[27px] items-center justify-end pr-[11px] italic">.No se ha realizado la búsqueda aún</p>
            <div className="ml-[9px] flex flex-1 flex-col border-t border-l border-[#33415c] bg-[#e9f1fa]">
                <table className="w-full table-fixed border-collapse text-[10px]">
                    <thead>
                        <tr className="h-[19px] border-b border-[#9db4d3] bg-[#dae7f5]">
                            <th className="w-[43px] border-r border-[#9db4d3]"><div className="flex justify-end pr-px"><FiltroIcon /></div></th>
                            <th className="w-[95px] border-r border-[#9db4d3] font-normal">
                                <div className="flex items-center justify-end gap-4 pr-px">Nº Registro<FiltroIcon /></div>
                            </th>
                            <th className="pl-[6px] text-left font-normal">Tipo Doc.</th>
                            <th className="w-[165px] border-r border-[#9db4d3] font-normal">
                                <div className="flex items-center pr-[2px]"><span className="flex-1 pl-3">Glosa</span><FiltroIcon /></div>
                            </th>
                            <th className="w-[49px]"></th>
                        </tr>
                    </thead>
                </table>
                <div className="mt-auto flex h-[18px] overflow-hidden border-y border-[#9db4d3]">
                    <div className="flex-1" />
                    <div className="w-[253px] border-x border-[#9db4d3] bg-[#dae7f5]" />
                    <div className="w-[274px]" />
                    <div className="w-[50px] overflow-hidden border-l border-[#9db4d3] bg-[#dae7f5] pl-[34px] font-bold leading-4">Total</div>
                </div>
                <HScroll thumb="w-[652px]" />
            </div>
            <div className="flex h-[38px] items-center pr-[7px] pl-[11px]">
                <button aria-label="Exportar" className={clsx(btnStyle, "size-[27px] justify-center")}><ExcelIcon /></button>
                <button aria-label="Seleccionar" className={clsx(btnStyle, "ml-1 size-[27px] justify-center")}><SeleccionIcon /></button>
                <Check label="Filtro Avanzado" className="ml-1" />
                <input type="checkbox" aria-label="Filtro" className={clsx(checkStyle, "ml-[5px]")} />
                <div className="ml-auto flex gap-[6px] pt-1">
                    {acciones.map((a) => (
                        <button key={a.label} className={clsx(btnStyle, "h-6 px-[3px]", a.width)}>
                            {a.icon}
                            <span className="flex-1 whitespace-pre text-center">{a.label}</span>
                        </button>
                    ))}
                </div>
            </div>
        </Grupo>
    </main>
);

const estado = "flex items-center gap-[2px] overflow-hidden bg-linear-to-b from-[#dae6f4] to-[#b8c9df] px-[2px]";

const StatusBar = () => (
    <footer>
        <div className="grid h-[26px] grid-cols-[365fr_365fr_364fr_341fr] gap-[2px] border-t-2 border-[#bdbdbd] bg-[#bdbdbd]">
            <div className={estado}><SistemaIcon />Client Version: 1.0.61.72<span className="ml-2">Tipo de cambio del dia : 3.762</span></div>
            <div className={estado}><BaseIcon /><span className="w-[300px] leading-3 text-[#2c4468]">Nodo: DEMO 2024 [12341234123] - Establecimiento Predeterminado</span></div>
            <div className={estado}><UsuarioIcon />Usuario: - - PLUS (plus)</div>
            <div className={estado}><RolIcon />Rol: FACTESOL PLUS</div>
        </div>
        <div className="h-1 bg-[#111]" />
    </footer>
);

/* ---------- dialog ---------- */

const columnas = [
    { label: "A", width: "w-[30px]" },
    { label: "Alm.", width: "w-12" },
    { label: "Cod. Producto", width: "w-[104px]" },
    { label: "Descripción Producto", width: "" },
    { label: "Cantidad", width: "w-[71px]" },
    { label: "UM.", width: "w-[51px]" },
    { label: "", width: "w-[35px]" },
    { label: "P. Unit.", width: "w-[87px]" },
    { label: "Valor", width: "w-[69px]" },
    { label: "Dscto%", width: "w-[47px]" },
    { label: "Dscto.", width: "w-[50px]" },
    { label: "Valor Venta", width: "w-[83px]" },
    { label: "M", width: "w-[7px]" },
];

const totales = [
    { label: "Anticipio", value: "", width: "w-[54px]", pad: "pl-1" },
    { label: "Percepción", value: "0.00", width: "w-[54px]" },
    { label: "Dscto", value: "", width: "w-[53px]", pad: "pl-[10px]" },
    { label: "V. Venta", value: "", width: "w-[69px]", pad: "pl-1" },
    { label: "ISC", value: "0.00", width: "w-[69px]", pad: "pl-4" },
    { label: "I.G.V", value: "", width: "w-[69px]", pad: "pl-3" },
    { label: "O.T.", value: "0.00", width: "w-[46px] ml-[10px]", pad: "pl-1" },
    { label: "Imp. Bolsa", value: "0.00", width: "w-[46px]" },
    { label: "Redondeo", value: "0.00", width: "w-[46px]" },
    { label: "Total", value: "", width: "w-[90px]", pad: "pl-1 font-bold" },
];

const BotonDetalle = ({ label, icon, width, off }: { label: string; icon: ReactNode; width: string; off?: boolean }) => (
    <button disabled={off} className={clsx(btnStyle, "h-[22px] px-1", width, off && "!text-[#8a8a8a]")}>
        {icon}
        <span className="flex-1 text-center">{label}</span>
    </button>
);

const Detalle = () => (
    <section className="mr-[4px] ml-[6px] mt-[11px] flex h-[205px] border-t border-[#8fb1e3] bg-[#bfdbff]">
        <div className="flex w-[21px] flex-col pt-[2px]">
            <button className="flex h-16 items-center justify-center rounded-l-[3px] border border-r-0 border-[#8fb1e3] bg-[#f2f7fe] text-[#1e3f7a]">
                <span className="rotate-180 [writing-mode:vertical-rl]">Generales</span>
            </button>
            <button className="flex h-[75px] items-center justify-center text-[#1e3f7a]">
                <span className="rotate-180 [writing-mode:vertical-rl]">Automotriz</span>
            </button>
        </div>
        <div className="flex min-w-0 flex-1 flex-col border-x border-b border-[#8fb1e3] bg-linear-to-b from-[#e4ecf9] to-[#eff5fe] pt-[2px]">
            <div className="mr-[15px] ml-1 flex h-[173px] flex-col border-t border-l border-[#25324d] bg-[#e9f1fa]">
                <table className="w-full table-fixed border-collapse">
                    <thead>
                        <tr className="h-[19px] border-b border-[#9db4d3] bg-[#dae7f5]">
                            <th className="w-10 border border-t-0 border-l-0 border-[#8099c0]">
                                <span className="flex justify-center">
                                    <Icon size={14} box={14}>
                                        <path d="M4.500.5h9v7h-9z" fill="#fff" stroke="#444a80" />
                                        <path d="M4.500 1.500h9" stroke="#444a80" strokeWidth="2" />
                                        <path d="M9 2v5M11 5h2" stroke="#444a80" />
                                        <path d="M.5 5.500h6v8h-6z" fill="#fff" stroke="#444a80" />
                                        <path d="M.5 8h6M.5 10.500h6" stroke="#444a80" />
                                    </Icon>
                                </span>
                            </th>
                            {columnas.map((c, i) => (
                                <th key={i} className={clsx("overflow-hidden border-r border-[#9db4d3] pl-[2px] text-left font-normal whitespace-nowrap last:border-r-0", c.width)}>
                                    {c.label}
                                </th>
                            ))}
                        </tr>
                    </thead>
                </table>
                <div className="mt-auto border-b border-[#c8d4e3]"><HScroll thumb="w-[350px]" /></div>
            </div>
            <div className="mt-[7px] flex items-start overflow-hidden pr-[6px] pl-[7px]">
                <button aria-label="Cesta" className={clsx(btnStyle, "h-[22px] w-6 justify-center")}><CestaIcon /></button>
                <Field label="Cantidad Total:" width="w-[83px]" className="ml-[6px]">
                    <TextBox className="w-[69px]" />
                </Field>
                <button aria-label="Hoja" className={clsx(btnStyle, "ml-1 h-[22px] w-6 justify-center")}><HojaVerdeIcon /></button>
                <div className="ml-auto flex gap-1">
                    <BotonDetalle label="Extraer" icon={<CadenaIcon />} width="w-[76px]" />
                    <BotonDetalle label="Embarque" icon={<CajaIcon />} width="w-[86px]" />
                    <BotonDetalle label="Registrar Producto" icon={<CajaIcon />} width="w-[127px]" />
                    <BotonDetalle label="Eliminar Detalle" icon={<DetalleIcon off />} width="w-[112px]" off />
                    <BotonDetalle label="Agregar Detalle" icon={<DetalleIcon />} width="w-[113px]" />
                </div>
            </div>
        </div>
    </section>
);

const colLabel = "w-[92px] pr-2 text-right";

const RegistroVenta = () => (
    <div role="dialog" aria-label="Registro de Venta" className="absolute top-[106px] right-[206px] left-[207px] z-20 rounded-t-[6px] rounded-b-[4px] border border-[#8593ab] bg-[#c2d4eb] pr-[7px] pb-[6px] pl-[6px]">
        <div className="-mr-[7px] -ml-[6px] flex h-[29px] items-center rounded-t-[5px] bg-linear-to-b from-[#c2d4eb] to-[#b9cbe4] pr-4 font-['Open_Sans',sans-serif] text-[#1e395b]">
            <h2 className="flex-1 pr-[10px] text-center">Registro de Venta</h2>
            <div className="flex w-[78px] justify-between">
                <button aria-label="Minimizar"><Minimizar /></button>
                <button aria-label="Maximizar"><Maximizar /></button>
                <button aria-label="Cerrar"><Cerrar /></button>
            </div>
        </div>

        <div className="flex h-[38px] items-center bg-[#b9cbe4] pt-px pr-[6px] pl-[26px]">
            <Field label="Periodo:" width="w-[57px]">
                <TextBox defaultValue="2024" disabled className="w-16 text-center !text-[#a890a8]" />
            </Field>
            <Field label="Nro: Registro:" width="w-[75px]" className="ml-[241px]">
                <TextBox defaultValue="11" className="w-[33px] text-center" />
            </Field>
            <span className="w-[22px] text-center">-</span>
            <div className="flex h-[21px] w-[126px] items-center border border-[#abc1de] bg-[#ecf5fe]">
                <input type="text" aria-label="Número" defaultValue="01000014" className="w-[84px] min-w-0 text-center outline-none" />
                <button aria-label="Anterior" className="ml-[2px]">
                    <svg width="7" height="12" viewBox="0 0 7 12" fill="#a3a8ae" stroke="#7d8288" strokeWidth=".6" aria-hidden="true"><path d="M6.500.5v11L.5 6z" /></svg>
                </button>
                <button aria-label="Siguiente" className="ml-[14px]">
                    <svg width="7" height="12" viewBox="0 0 7 12" fill="#a3a8ae" stroke="#7d8288" strokeWidth=".6" aria-hidden="true"><path d="M.5.5v11l6-5.500z" /></svg>
                </button>
            </div>
            <Field label="I.G.V." width="w-[51px]" className="ml-auto">
                <Combo value="18" className="w-[121px]" />
            </Field>
            <button aria-label="Ayuda" className={clsx(btnStyle, "ml-1 h-[26px] w-6 justify-center")}><HelpIcon /></button>
        </div>

        <div className="bg-white pb-[7px]">
            <div className="flex h-[25px] items-center pt-1 pl-[11px]">
                <Field label="Documento:" width="w-[63px]">
                    <Combo value="--Seleccionar--" className="w-[72px]" pad="pl-[6px]" />
                </Field>
                <TextBox aria-label="Serie" className="ml-[5px] w-20" />
                <span className="w-[17px] text-center">-</span>
                <div className="flex h-[21px] w-[85px] items-center border border-[#abc1de] bg-[#ecf5fe] pl-px">
                    <LapizIcon />
                    <input type="text" aria-label="Correlativo" className="min-w-0 flex-1 outline-none" />
                </div>
                <Field label="Documento Ref:" width="w-[90px]" className="ml-[116px]">
                    <Combo value="--Seleccionar--" className="w-[68px]" pad="pl-[6px]" />
                </Field>
                <TextBox aria-label="Serie Ref" className="ml-[6px] w-[45px]" />
                <TextBox aria-label="Número Ref" className="ml-1 w-[76px]" />
                <Field label="Fecha Ref:" width="w-[57px]" className="ml-[2px]">
                    <DateBox off className="w-[78px]" />
                </Field>
            </div>

            <fieldset className="mt-[2px] mr-[11px] ml-3 rounded-[4px] border border-[#8ba3c7] pb-1">
                <legend className="ml-[2px] px-[5px] leading-3">Cliente</legend>
                <div className="flex items-start pt-[2px]">
                    <button aria-label="Nuevo cliente" className={clsx(btnStyle, "ml-[3px] h-7 w-6 justify-center")}><MasIcon /></button>
                    <button aria-label="Opciones" className={clsx(btnStyle, "h-7 w-[13px] justify-center")}><Flecha color="#1e395b" /></button>
                    <label className="flex pt-px">
                        <span className="w-[36px] pl-[5px] pt-[5px] text-xs leading-4">RUC</span>
                        <span className="mt-px flex h-[21px] w-[154px] items-center border border-[#abc1de] bg-[#e6effa] pl-[2px]">
                            <SunatIcon size={17} top="#9b1b2e" bottom="#1e2559" />
                            <input type="text" placeholder="Revisar" className="min-w-0 flex-1 pl-[2px] text-xs outline-none placeholder:text-[#777]" />
                        </span>
                    </label>
                    <button aria-label="Buscar" className={clsx(btnStyle, "mt-px ml-px h-6 w-6 justify-center")}><LupaIcon /></button>
                    <div className="flex flex-1 flex-col gap-[2px] pt-px pl-[6px]">
                        <div className="flex pr-1">
                            <Field label="Código Cliente" width="w-20">
                                <TextBox className="w-[114px]" />
                            </Field>
                            <Field label="Nombre / Razón Social" width="w-[123px] pl-[2px]" className="flex-1">
                                <TextBox className="w-0 flex-1" />
                            </Field>
                        </div>
                        <Field label="Dirección" width="w-20 pr-[5px] text-right">
                            <TextBox className="w-0 flex-1" />
                        </Field>
                    </div>
                </div>
            </fieldset>

            <div className="mt-[6px] flex flex-col gap-1 pl-[6px]">
                <div className="flex h-[21px] items-center">
                    <Field label="Fecha Emisión" width={colLabel}><DateBox className="w-[84px]" /></Field>
                    <Field label="F. Ord. Servicio" width="w-[89px] pl-[5px]"><DateBox className="w-[84px]" /></Field>
                    <Field label="Tipo Cambio" width="w-[74px] pl-[5px]"><TextBox defaultValue="3.762" className="w-[49px] pr-[2px] text-right" /></Field>
                    <Field label="Nro. Días" width="w-[55px] pl-1"><TextBox defaultValue="0" className="w-[35px]" /></Field>
                    <Field label="F. Venc." width="w-[45px]"><DateBox className="w-[81px]" /></Field>
                    <Field label="F. Mov. Almacén" width="w-[90px] pl-1"><DateBox className="w-[81px]" /></Field>
                    <button className={clsx(btnStyle, "ml-auto mr-[10px] h-[26px] w-[123px] justify-between pr-[6px] pl-[15px]")}>Percepción: NO<Flecha color="#1e395b" /></button>
                </div>
                <div className="flex h-[21px] items-center">
                    <Field label="Cond. de Pago" width={colLabel}><Combo value="YAPE/PLIN" className="w-[137px]" /></Field>
                    <button aria-label="Sunat" className="ml-[7px] flex h-4 w-[35px] items-center justify-between border border-dotted border-black px-[3px]">
                        <SunatIcon size={14} top="#9b1020" bottom="#15277c" /><Flecha color="#000" />
                    </button>
                    <Field label="Concepto" width="w-[97px] pr-2 text-right" className="flex-1"><TextBox defaultValue="VENTA DE MERCADERÍA" className="w-0 flex-1" /></Field>
                    <Field label="Placa Vehículo:" width="w-[107px] pl-[3px]" className="mr-[21px]"><TextBox className="w-[123px]" /></Field>
                </div>
                <div className="flex h-[21px] items-center">
                    <Field label="Moneda" width={colLabel}><Combo value="SOLES" className="w-[181px]" /></Field>
                    <Field label="Estado" width="w-[95px] pr-2 text-right"><Combo value="ACTIVO" className="w-[181px]" /></Field>
                    <div className="ml-[13px] flex gap-[11px] pt-1">
                        <Check label="Afecto a IGV" checked />
                        <Check label="Precios Incluyen IGV" checked />
                        <Check label="Deducción Anticipo" />
                        <Check label="Gratuito" />
                    </div>
                </div>
                <div className="flex h-[21px] items-center">
                    <Field label="Vendedor" width={colLabel}><Combo value="--Seleccionar--" className="w-[181px]" /></Field>
                    <Field label="Tipo Operación" width="w-[95px] pr-2 text-right"><Combo value="10 | Gravado - Operación Oner" className="w-[181px]" /></Field>
                    <Field label="Dscto" width="w-[45px] pl-[10px]"><TextBox placeholder="%" className="w-[69px] pr-2 text-right placeholder:text-[#888]" /></Field>
                    <Field label="Comisión" width="w-[60px] pl-[7px]"><TextBox defaultValue="0" className="w-[49px] pr-[2px] text-right" /></Field>
                    <span className="ml-[6px]">%</span>
                </div>
                <div className="flex h-[21px] items-center">
                    <Field label="Tipo de Venta" width={colLabel}><Combo value="03 | VENTA" className="w-[84px]" /></Field>
                    <Combo value="--Seleccionar--" label="Subtipo" className="ml-[6px] w-[91px]" pad="pl-[3px] pr-5" />
                    <div className="ml-[7px] flex gap-[10px]">
                        <Check label="Anticipo" />
                        <Check label="Afecto Detracción" />
                        <Check label="Afecto Retención" />
                    </div>
                </div>
                <div className="flex h-[21px] items-center pl-[271px]">
                    <Check label="Rec. Consumo" />
                    <Check label="Precios Incl. Rec. Consumo" off className="ml-2" />
                    <Field label="Porc" width="w-[35px] pl-[5px] text-[#858585]"><TextBox defaultValue="13" disabled className="w-7 pr-px text-right !text-[#a890b0]" /></Field>
                    <span className="ml-1 text-[#858585]">%</span>
                    <Field label="O. Serv." width="w-[54px] pl-[5px]"><TextBox className="w-[66px]" /></Field>
                    <Field label="Est. Aceptación:" width="w-[96px] pl-[7px]"><Combo value="PENDIENTE" off className="w-[58px]" pad="pl-[3px] pr-5" /></Field>
                </div>
            </div>

            <div className="mt-[3px] mr-[3px] ml-3 flex h-[39px] items-center rounded-[4px] border border-[#8ba3c7]">
                <Field label="Nro Pedido" width="w-[85px] pr-2 text-right"><TextBox className="w-[181px]" /></Field>
                <Field label="G. de Remisión:" width="w-[99px] pl-[10px]"><TextBox className="w-[38px]" /></Field>
                <span className="w-[18px] text-center">-</span>
                <TextBox aria-label="Guías" defaultValue="Use comas para separar" className="w-[125px] pr-[10px]" />
                <Field label="O/Compra:" width="w-[69px] pl-[10px]" className="min-w-0 flex-1"><TextBox className="w-0 flex-1" /></Field>
                <Field label="Fch. Ord. Compra:" width="w-[103px] pl-[7px]">
                    <DateBox value="30/11/2024" className="w-[98px]">
                        <input type="checkbox" aria-label="Usar fecha" className="ml-[2px] size-[13px] shrink-0 appearance-none border border-[#1b79c9]" />
                    </DateBox>
                </Field>
                <button aria-label="Transporte" className={clsx(btnStyle, "ml-[5px] h-7 w-[25px] justify-center")}><CamionIcon /></button>
                <button aria-label="Opciones transporte" className={clsx(btnStyle, "mr-2 h-7 w-[13px] justify-center")}><Flecha color="#1e395b" /></button>
            </div>

            <Detalle />

            <div className="flex h-10 items-start pr-[5px] pl-[7px]">
                <div className="flex pt-[11px]">
                    <button className={clsx(btnStyle, "h-[29px] w-[59px] justify-between px-1")}><SalirIcon /><span className="pr-px">Salir</span></button>
                    <button className={clsx(btnStyle, "ml-[5px] h-[27px] w-[62px] justify-center")}>Imprimir</button>
                    <button aria-label="Opciones de impresión" className={clsx(btnStyle, "h-[27px] w-[13px] justify-center")}><Flecha color="#1e395b" /></button>
                    <button className={clsx(btnStyle, "ml-[5px] h-[29px] w-[72px] justify-between px-1")}><GuardarIcon />Guardar</button>
                </div>
                <div className="ml-auto flex gap-[2px] pt-1">
                    {totales.map((t) => (
                        <label key={t.label} className={clsx("flex flex-col gap-[6px]", t.width)}>
                            <span className={clsx("-ml-[2px] overflow-visible text-[9px] leading-3 whitespace-nowrap", t.pad)}>{t.label}</span>
                            <input type="text" defaultValue={t.value} className="h-[18px] w-full border border-b-0 border-[#abc1de] bg-[#ecf5fe] pr-[2px] text-right outline-none" />
                        </label>
                    ))}
                </div>
            </div>
        </div>

        <div className="flex h-[23px] items-center border border-[#4f7bb5] border-t-2 bg-linear-to-b from-[#dae6f4] to-[#b8c9df] pl-[2px]">Listo!</div>
    </div>
);

export default function App() {
    return (
        <div className="relative flex min-h-screen flex-col overflow-hidden bg-[#deeaf6] font-['Liberation_Sans',Arial,sans-serif] text-[11px] text-black">
            <Ribbon />
            <div className="flex h-[27px] items-center gap-3 border-b border-[#9a9a9a] bg-[#ffffbd] pl-1">
                <AlertaIcon />
                <p>¡AVISO!: Tiene 2 factura(s) electrónicas</p>
            </div>
            <div className="flex h-[25px] items-end border-l border-[#9a9a9a] bg-[#b9cbe4] pl-[3px]">
                <button className="flex h-[21px] w-[187px] items-center rounded-t-[3px] border border-b-0 border-[#dce8f6] bg-linear-to-b from-[#e7f0fb] to-[#f8fbff]">
                    <MonitorIcon size={17} />
                    <span>Bandeja Registro Venta</span>
                    <svg width="9" height="8" viewBox="0 0 9 8" className="mr-[6px] ml-auto" stroke="#000" strokeWidth="2" aria-hidden="true"><path d="M1 0l7 8M8 0L1 8" /></svg>
                </button>
            </div>
            <Bandeja />
            <StatusBar />
            <RegistroVenta />
        </div>
    );
}
